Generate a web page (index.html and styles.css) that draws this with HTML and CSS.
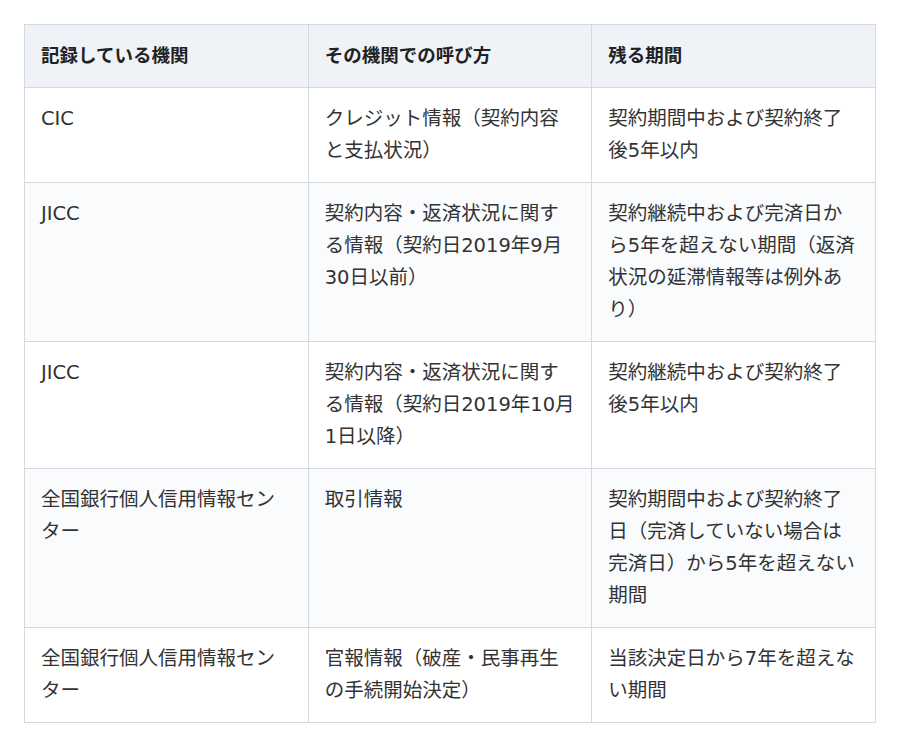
FILE: index.html
```html
<!DOCTYPE html>
<html lang="ja">
<head>
<meta charset="utf-8">
<title>信用情報の記録期間</title>
<link rel="stylesheet" href="styles.css">
</head>
<body>
<table class="info-table">
  <thead>
    <tr>
      <th>記録している機関</th>
      <th>その機関での呼び方</th>
      <th>残る期間</th>
    </tr>
  </thead>
  <tbody>
    <tr>
      <td>CIC</td>
      <td>クレジット情報（契約内容と支払状況）</td>
      <td>契約期間中および契約終了後5年以内</td>
    </tr>
    <tr>
      <td>JICC</td>
      <td>契約内容・返済状況に関する情報（契約日2019年9月30日以前）</td>
      <td>契約継続中および完済日から5年を超えない期間（返済状況の延滞情報等は例外あり）</td>
    </tr>
    <tr>
      <td>JICC</td>
      <td>契約内容・返済状況に関する情報（契約日2019年10月1日以降）</td>
      <td>契約継続中および契約終了後5年以内</td>
    </tr>
    <tr>
      <td>全国銀行個人信用情報センター</td>
      <td>取引情報</td>
      <td>契約期間中および契約終了日（完済していない場合は完済日）から5年を超えない期間</td>
    </tr>
    <tr>
      <td>全国銀行個人信用情報センター</td>
      <td>官報情報（破産・民事再生の手続開始決定）</td>
      <td>当該決定日から7年を超えない期間</td>
    </tr>
  </tbody>
</table>
</body>
</html>
```

FILE: styles.css
```css
html, body {
  margin: 0;
  padding: 0;
  background: #ffffff;
}
body {
  padding: 24px;
  font-family: "DejaVu Sans", "Noto Sans CJK JP", sans-serif;
  font-size: 19.5px;
  line-height: 32px;
  color: #333333;
}
.info-table {
  width: 100%;
  border-collapse: collapse;
  table-layout: fixed;
  border: 1px solid #d3d9df;
}
.info-table th,
.info-table td {
  border: 1px solid #d3d9df;
  padding: 15px 16px;
  text-align: left;
  vertical-align: top;
}
.info-table th {
  background: #eff3f7;
  font-weight: bold;
  font-size: 18.5px;
  color: #222222;
}
.info-table tbody tr:nth-child(even) td {
  background: #f9fbfd;
}
```
